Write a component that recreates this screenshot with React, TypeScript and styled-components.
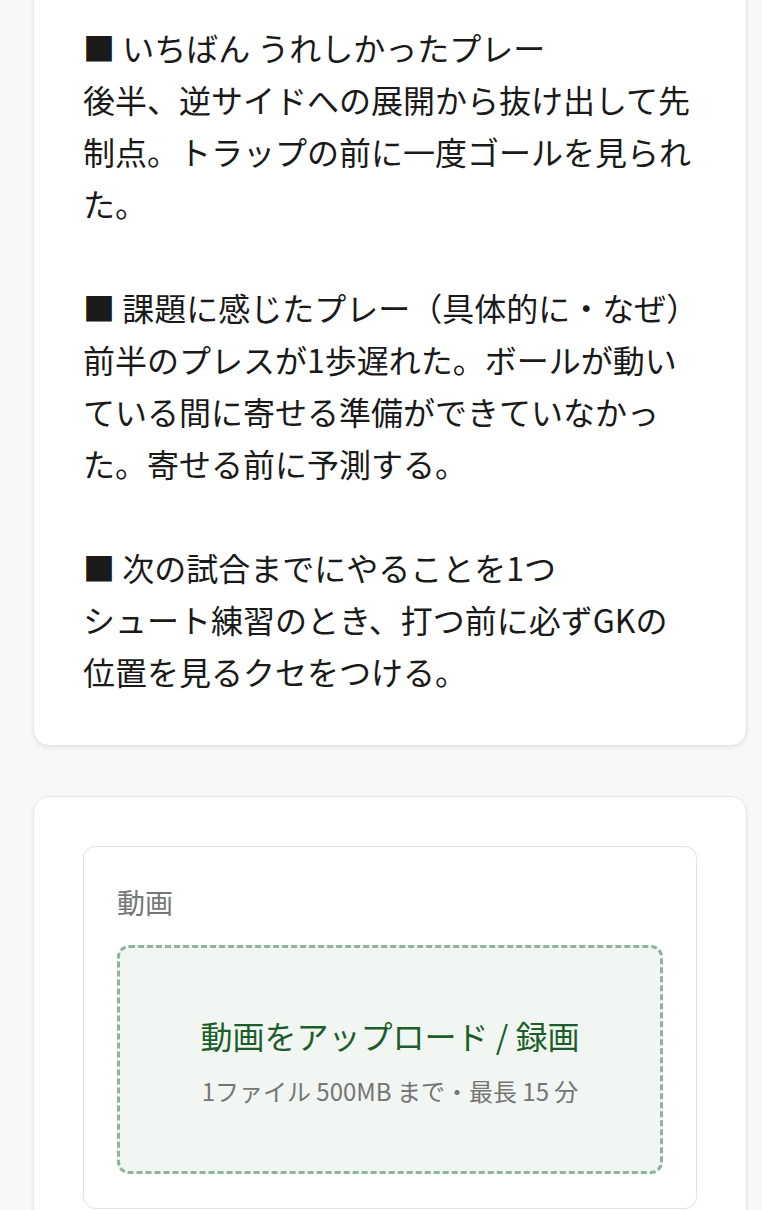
import React from "react";
import styled, { createGlobalStyle } from "styled-components";

const GlobalStyle = createGlobalStyle`
  html, body {
    margin: 0;
    padding: 0;
    background: #f8f8f8;
  }
  body {
    font-family: "Noto Sans CJK JP", "Noto Sans", sans-serif;
    color: #1a1a1a;
    overflow: hidden;
  }
`;

const App = () => {
  return (
    <>
      <GlobalStyle />
      <Page>
        <Card>
          <NoteText>
            {"■ いちばん うれしかったプレー\n後半、逆サイドへの展開から抜け出して先制点。トラップの前に一度ゴールを見られた。\n\n■ 課題に感じたプレー（具体的に・なぜ"}
            <LineEndPunct>）</LineEndPunct>
            {"\n前半のプレスが1歩遅れた。ボールが動いている間に寄せる準備ができていなかった。寄せる前に予測する。\n\n■ 次の試合までにやることを1つ\nシュート練習のとき、打つ前に必ずGKの位置を見るクセをつける。"}
          </NoteText>
        </Card>
        <Card>
          <Field>
            <FieldLabel>動画</FieldLabel>
            <UploadZone type="button">
              <UploadTitle>動画をアップロード / 録画</UploadTitle>
              <UploadHint>1ファイル 500MB まで・最長 15 分</UploadHint>
            </UploadZone>
          </Field>
        </Card>
      </Page>
    </>
  );
};

export default App;

const Page = styled.div`
  display: flex;
  flex-direction: column;
  gap: 50px;
  margin-top: -29px;
  padding: 0 15px 40px 33px;
`;

const Card = styled.section`
  background: #fff;
  border: 1px solid #e6e6e6;
  border-radius: 16px;
  box-shadow: 0 2px 4px rgba(0, 0, 0, 0.07);
  padding: 49px 49px 48px;
`;

const NoteText = styled.p`
  margin: 0;
  font-size: 32px;
  line-height: 52px;
  white-space: pre-wrap;
  color: #1a1a1a;
`;

/* closing bracket trimmed to half width at line end */
const LineEndPunct = styled.span`
  font-feature-settings: "halt";
`;

const Field = styled.div`
  border: 1px solid #e2e2e2;
  border-radius: 12px;
  padding: 32px 33px 34px;
  display: flex;
  flex-direction: column;
  gap: 20px;
`;

const FieldLabel = styled.div`
  font-size: 28px;
  line-height: 46px;
  color: #777;
`;

const UploadZone = styled.button`
  display: flex;
  flex-direction: column;
  align-items: center;
  justify-content: center;
  gap: 16px;
  height: 229px;
  box-sizing: border-box;
  border: 3px dashed #8fb49a;
  border-radius: 12px;
  background: #f1f6f2;
  font-family: inherit;
  cursor: pointer;
`;

const UploadTitle = styled.span`
  font-size: 32px;
  line-height: 45px;
  color: #1c5e2a;
`;

const UploadHint = styled.span`
  font-size: 24px;
  line-height: 33px;
  color: #757575;
`;
